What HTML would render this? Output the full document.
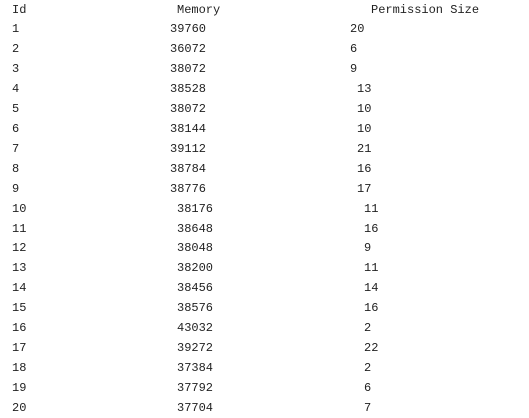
<!DOCTYPE html>
<html><head><style>
body{margin:0;background:#fff;width:529px;height:418px;overflow:hidden;position:relative;font-family:"Liberation Mono",monospace;font-size:12px;color:#222}
div{position:absolute;height:20px;line-height:20px;white-space:pre}
</style></head><body>
<div style="left:12px;top:0px">Id</div>
<div style="left:177px;top:0px">Memory</div>
<div style="left:371px;top:0px">Permission Size</div>
<script>
var d=[[1,39760,20],[2,36072,6],[3,38072,9],[4,38528,13],[5,38072,10],[6,38144,10],[7,39112,21],[8,38784,16],[9,38776,17],[10,38176,11],[11,38648,16],[12,38048,9],[13,38200,11],[14,38456,14],[15,38576,16],[16,43032,2],[17,39272,22],[18,37384,2],[19,37792,6],[20,37704,7]];
var h='';
d.forEach(function(r,i){
var t=19+i*19.95;
var mx=r[0]<10?170:177;
var px=r[0]<4?350:(r[0]<10?357:364);
h+='<div style="left:12px;top:'+t+'px">'+r[0]+'</div><div style="left:'+mx+'px;top:'+t+'px">'+r[1]+'</div><div style="left:'+px+'px;top:'+t+'px">'+r[2]+'</div>';
});
document.write(h);
</script>
</body></html>
